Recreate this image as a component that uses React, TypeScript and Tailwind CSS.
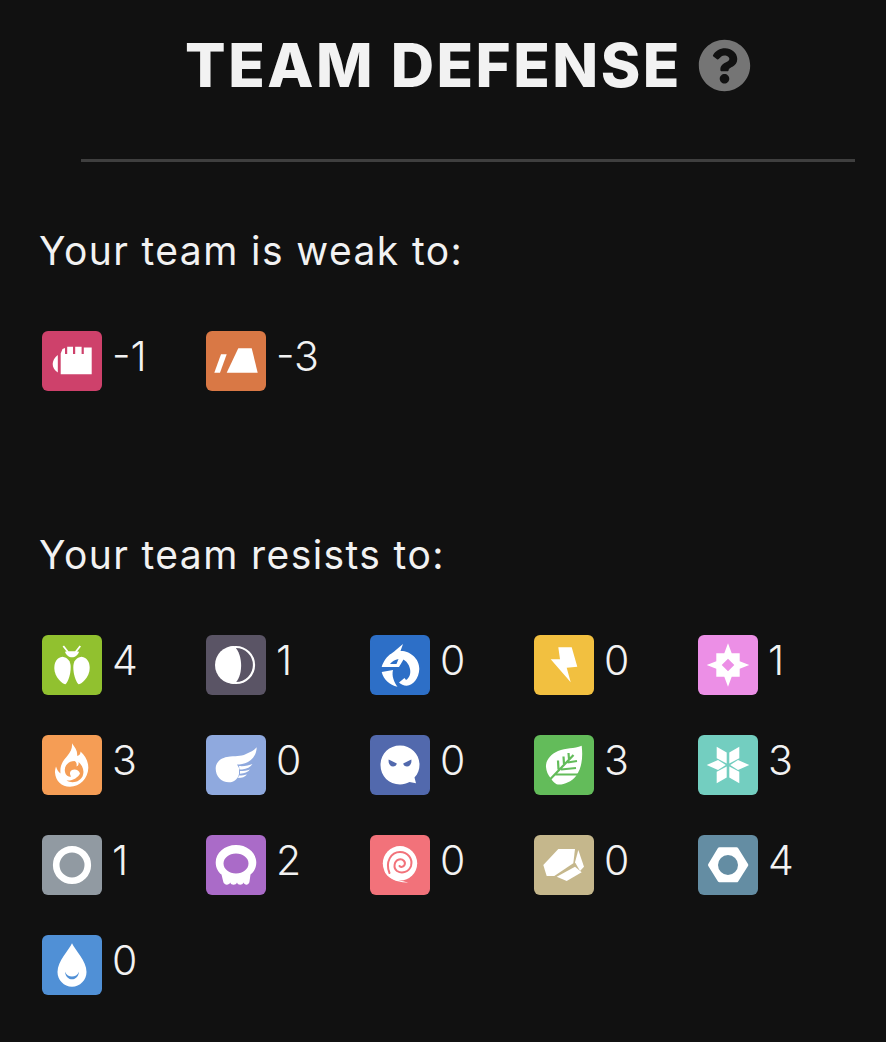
import { ReactNode } from 'react';
import { FaQuestionCircle } from 'react-icons/fa';

type TypeEntry = { name: string; color: string; count: string };

const icons: Record<string, (bg: string) => ReactNode> = {
  fighting: () => (
    <>
      <path d="M15.8 24 C12.5 26.5 10.7 30 10.7 33 C10.7 36.5 12.5 39.5 15.8 41.5 Z" fill="#fff" />
      <path d="M18.7 43.3 L18.7 22.5 L20.5 18 L23 17 L23 23 L25.2 23 L25.2 15.7 L31 15.7 L31 23 L33.2 23 L33.2 15.7 L39.6 15.7 L39.6 23 L41.8 23 L41.8 16.5 L49.7 16.5 L49.7 43.3 Z" fill="#fff" />
    </>
  ),
  ground: () => (
    <>
      <path d="M8.3 41.7 L14 41.7 L20.7 23.3 L15 23.3 Z" fill="#fff" />
      <path d="M20.7 41.7 L32.3 17.3 L45.7 17.3 L51.7 41.7 Z" fill="#fff" />
    </>
  ),
  bug: () => (
    <>
      <path d="M21.3 11 L26 17 M38.3 11 L33.6 17" stroke="#fff" strokeWidth="1.8" fill="none" />
      <path d="M23 16.7 C26 16.2 34 16.2 37 16.7 C36 20 33 22.3 30 22.3 C27 22.3 24 20 23 16.7 Z" fill="#fff" />
      <path d="M20.5 21.7 C25.5 22.5 28.7 26 28.7 32 C28.7 39 26.5 46 23.5 49.3 C21.5 49.5 12.3 43 12.3 33 C12.3 27 15 22.5 20.5 21.7 Z" fill="#fff" />
      <path d="M39.5 21.7 C34.5 22.5 31.3 26 31.3 32 C31.3 39 33.5 46 36.5 49.3 C38.5 49.5 47.7 43 47.7 33 C47.7 27 45 22.5 39.5 21.7 Z" fill="#fff" />
    </>
  ),
  dark: () => (
    <>
      <circle cx="30" cy="30" r="18" fill="none" stroke="#fff" strokeWidth="2.2" />
      <path d="M28 11 A19 19 0 0 0 28 49 C 37 43 38 20 28 11 Z" fill="#fff" />
    </>
  ),
  dragon: () => (
    <>
      <path d="M33 9 L30.5 16 C39 15.5 49.5 23 49.3 34 C49 43 43 50.5 36.7 50.7 C33.5 50.7 31 49.5 29 47.5 L34.5 43 L36 45 C39.5 43 41 38.5 40 34 C39 29 36 26 33.5 24.5 L29 32 L11.7 32 C13 27 17 21 21.5 18.5 C25 16 29 12 33 9 Z M20 29 L26.5 29 L28.5 24 C25 24.5 22 26.5 20 29 Z" fill="#fff" fillRule="evenodd" />
      <path d="M11.7 37 L23 35 C21.5 41 24 47 27.5 51.7 C19.5 50 13.5 44.5 11.7 37 Z" fill="#fff" />
    </>
  ),
  electric: () => <path d="M24.3 12.3 L37.7 12.3 L43.3 31.7 L32.7 32.7 L36.7 47.3 L16.7 24.3 L26 24.3 Z" fill="#fff" />,
  fairy: () => (
    <path
      fillRule="evenodd"
      fill="#fff"
      d="M30 8.3 L33.7 18.3 L41.7 18.3 L41.7 26.3 L51.3 30 L41.7 33.7 L41.7 41.7 L33.7 41.7 L30 51.7 L26.3 41.7 L18.3 41.7 L18.3 33.7 L8.7 30 L18.3 26.3 L18.3 18.3 L26.3 18.3 Z M30 23.7 L23.7 30 L30 36.3 L36.3 30 Z"
    />
  ),
  fire: () => (
    <path
      fillRule="evenodd"
      fill="#fff"
      d="M30 8.3 C33 13 35.5 15 35.2 21 C38 20 38.5 18.5 38.5 16.5 C43.5 21 46.5 27 46.3 33 C46 43.5 38 51.7 28 51.7 C19.5 51.7 13.5 46 13 37.5 C12.9 35.5 13.5 33 14 31.5 C15 35 16.5 37 18.5 38.5 C17.5 29 22 25 26 20 C28.5 17 30.5 13 30 8.3 Z M32.5 26 C26.5 26 22.5 30.5 22.8 35.5 C23 40 26.5 42.5 29 41.5 C27.5 39.5 27.5 36.5 30 35 C33 33.5 37 35 38 38.5 C36 42.5 31 46 24.5 45.5 C30 49 39 47 41 40 C42.5 34.5 40 30 36.5 27 C37 29.5 36 31 34.5 31.5 C35 29 34.5 27 32.5 26 Z"
    />
  ),
  flying: () => (
    <>
      <path d="M9.7 33 C10 27 15 23 21 22 C30 20.5 34 22 40 19 C45 17 48.5 15 50.7 12.3 C50.5 19 47.5 24 42 27 C38 29 34 29.5 31 29.5 L33 33 L33 39 C32 44 28 47.3 23 47.3 C15 47.3 9.5 41 9.7 33 Z" fill="#fff" />
      <path d="M33 31 C38 31.5 43 30.5 46.5 29 C44.5 32 41 34 36 34.5 L33.5 34.5 Z" fill="#fff" />
      <path d="M34 36 C37.5 36 41 35.5 44 34.5 C42 37 38.5 38.5 34 38.7 Z" fill="#fff" />
      <path d="M33 40.5 C36 40.5 39 40 41 39.5 C39 42 36 43 32 43 Z" fill="#fff" />
    </>
  ),
  ghost: (bg) => (
    <>
      <path d="M30 10.5 C41 10.5 49.5 19 49.5 29.5 C49.5 34.5 48 39 44.5 42.5 L46 48.3 L39.5 47 C36.5 48.5 33.5 49.5 30 49.5 C19 49.5 10.5 41 10.5 30 C10.5 19 19 10.5 30 10.5 Z" fill="#fff" />
      <path d="M18.7 24.5 L26.8 28.5 C26.5 30.5 25 31.5 23 31.5 C20 31.5 18 28 18.7 24.5 Z" fill={bg} />
      <path d="M41.3 24.5 L33.2 28.5 C33.5 30.5 35 31.5 37 31.5 C40 31.5 42 28 41.3 24.5 Z" fill={bg} />
    </>
  ),
  grass: (bg) => (
    <>
      <path d="M47.7 10.7 C49 22 48 33 42 41 C37 47.5 28 50.5 22.7 49.3 C20 47.5 18 45.5 16.5 43 C14 40 12.3 36 12 32 C11.5 26 16 19.5 24 16 C32 12.5 40 14 47.7 10.7 Z" fill="#fff" />
      <path d="M39.5 20 L14.5 46 M24.5 34.5 L24 25.5 M30 29 L29.5 21.5 M35 24 L34.5 18 M33.5 27.5 L43 26 M27 34.5 L42 33 M21 39.5 L46 39.5" stroke={bg} strokeWidth="2.2" fill="none" />
    </>
  ),
  ice: () => (
    <path
      fill="#fff"
      d="M8.7 30 L20 25 L27.8 30 L20 35 Z M51.3 30 L40 25 L32.2 30 L40 35 Z M18.7 11.7 L28.7 17.5 L28.7 28.5 L18.7 23.3 Z M41.3 11.7 L31.3 17.5 L31.3 28.5 L41.3 23.3 Z M18.7 48.3 L28.7 42.5 L28.7 31.5 L18.7 36.7 Z M41.3 48.3 L31.3 42.5 L31.3 31.5 L41.3 36.7 Z"
    />
  ),
  normal: () => <circle cx="30" cy="30" r="15.8" fill="none" stroke="#fff" strokeWidth="6.6" />,
  poison: () => (
    <path
      fillRule="evenodd"
      fill="#fff"
      d="M30 10 C41.5 10 50.3 18 50.3 27.5 C50.3 33 47.5 37.5 44.5 39.5 L43.5 46.5 C43 50.5 38.5 50.5 37.5 47.5 C36.5 50.5 31.8 50.5 31 47.5 C30 50.5 25 50.5 24.3 47.5 C23 50.5 18 50.5 17.2 46.5 L15.5 39.5 C12.5 37.5 9.7 33 9.7 27.5 C9.7 18 18.5 10 30 10 Z M30 18.5 C23 18.5 17.5 23 17.5 28.5 C17.5 34 23 38.5 30 38.5 C37 38.5 42.5 34 42.5 28.5 C42.5 23 37 18.5 30 18.5 Z"
    />
  ),
  psychic: (bg) => (
    <>
      <circle cx="30" cy="28.3" r="17.2" fill="#fff" />
      <path d="M14 35 C17 44 28 48 39 47.3 C31 46.5 24 44 19 39 Z" fill="#fff" />
      <path d="M19.5 38 C15 27 21 17 30 17 C38 17 43 24 41 31 C39 37 32 39 27 36 C23 33 24 26 29 24.5 C33 23.5 36 27 34.5 30 C33.5 32 31 32.5 29.5 31" fill="none" stroke={bg} strokeWidth="2" strokeLinecap="round" />
    </>
  ),
  rock: () => (
    <>
      <path d="M9.3 30 L24.3 14 L41 14 L39.3 28.3 L20.3 41 L12.7 41 Z" fill="#fff" />
      <path d="M44.3 15 L50 31.7 L46 36 L41 27.3 Z" fill="#fff" />
      <path d="M22.7 41.7 L41 31.7 L47.7 37.3 L32.7 46 Z" fill="#fff" />
    </>
  ),
  steel: () => (
    <path
      fillRule="evenodd"
      fill="#fff"
      stroke="#fff"
      strokeWidth="4"
      strokeLinejoin="round"
      d="M12 30 L21.5 14.3 L38.5 14.3 L48.3 30 L38.5 45.3 L21.5 45.3 Z M30 18 A12 12 0 1 0 30 42 A12 12 0 1 0 30 18 Z"
    />
  ),
  water: (bg) => (
    <>
      <path d="M30 8.3 C33 15 44.5 26 44.5 37 C44.5 45 38 51.7 30 51.7 C22 51.7 15.5 45 15.5 37 C15.5 26 27 15 30 8.3 Z" fill="#fff" />
      <path d="M23 36.7 C23.5 42 27 44.3 30 44.3 C33 44.3 36.5 42 37 36.7 C35.5 40 33 41.5 30 41.5 C27 41.5 24.5 40 23 36.7 Z" fill={bg} />
    </>
  ),
};

const weak: TypeEntry[] = [
  { name: 'fighting', color: '#ce416b', count: '-1' },
  { name: 'ground', color: '#d97845', count: '-3' },
];

const resists: TypeEntry[] = [
  { name: 'bug', color: '#91c12f', count: '4' },
  { name: 'dark', color: '#5a5465', count: '1' },
  { name: 'dragon', color: '#2d6fc7', count: '0' },
  { name: 'electric', color: '#f2c040', count: '0' },
  { name: 'fairy', color: '#ec8fe6', count: '1' },
  { name: 'fire', color: '#f59d55', count: '3' },
  { name: 'flying', color: '#8fa9de', count: '0' },
  { name: 'ghost', color: '#5269ad', count: '0' },
  { name: 'grass', color: '#63bc5a', count: '3' },
  { name: 'ice', color: '#73cec0', count: '3' },
  { name: 'normal', color: '#919aa2', count: '1' },
  { name: 'poison', color: '#aa6bc8', count: '2' },
  { name: 'psychic', color: '#f2727a', count: '0' },
  { name: 'rock', color: '#c5b78c', count: '0' },
  { name: 'steel', color: '#648da3', count: '4' },
  { name: 'water', color: '#5090d6', count: '0' },
];

function TypeCell({ type }: { type: TypeEntry }) {
  return (
    <div className="flex items-start gap-[10px]">
      <div className="w-[60px] h-[60px] rounded-[6px] shrink-0" style={{ backgroundColor: type.color }}>
        <svg viewBox="0 0 60 60" className="w-[60px] h-[60px]">
          {icons[type.name](type.color)}
        </svg>
      </div>
      <span className="text-[41px] leading-[50px] text-[#f2f2f2] font-light">{type.count}</span>
    </div>
  );
}

export default function App() {
  return (
    <main className="min-h-screen bg-[#111111] text-[#f2f2f2] font-['Inter',sans-serif] overflow-hidden">
      <header className="pl-[81px] pr-[31px] pt-[28px]">
        <h1 className="flex items-center justify-center gap-[16px] h-[74px]">
          <span className="text-[60px] leading-[74px] font-extrabold tracking-[2.5px]">TEAM DEFENSE</span>
          <FaQuestionCircle className="text-[53px] text-[#757575]" />
        </h1>
        <div className="mt-[57px] h-[3px] bg-[#3f3f3f]" />
      </header>

      <section className="mt-[65px] pl-[39px]">
        <h2 className="text-[39px] leading-[48px] font-normal tracking-[1.4px]">Your team is weak to:</h2>
        <div className="mt-[56px] ml-[3px] grid grid-cols-[164px_164px_164px_164px_164px] auto-rows-[100px]">
          {weak.map((t) => (
            <TypeCell key={t.name} type={t} />
          ))}
        </div>
      </section>

      <section className="mt-[100px] pl-[39px]">
        <h2 className="text-[39px] leading-[48px] font-normal tracking-[1.4px]">Your team resists to:</h2>
        <div className="mt-[56px] ml-[3px] grid grid-cols-[164px_164px_164px_164px_164px] auto-rows-[100px]">
          {resists.map((t) => (
            <TypeCell key={t.name} type={t} />
          ))}
        </div>
      </section>
    </main>
  );
}
